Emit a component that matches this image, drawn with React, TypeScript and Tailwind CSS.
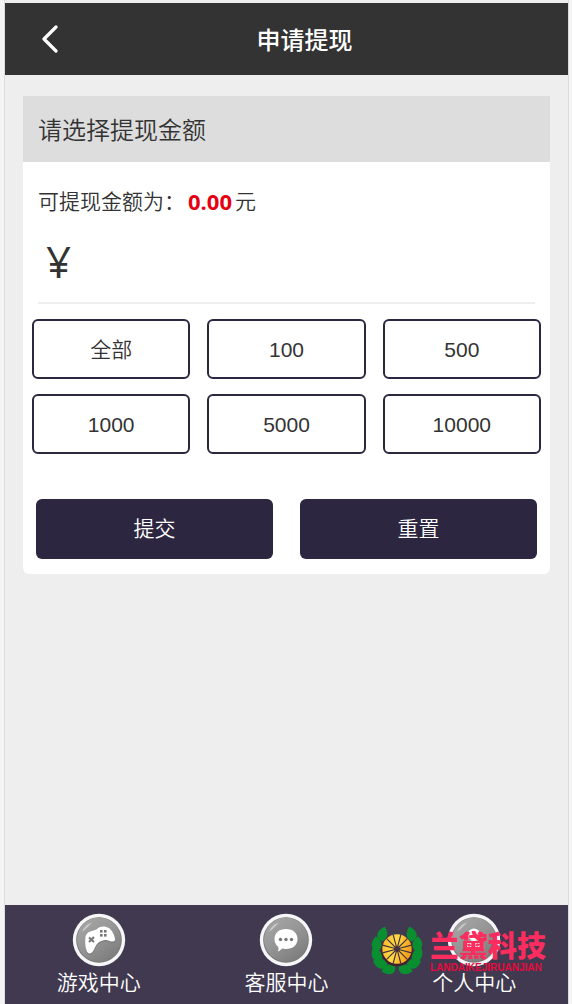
import { useId, useState } from "react";
import type { ReactNode } from "react";

const amounts = ["全部", "100", "500", "1000", "5000", "10000"];

function Disc({ children }: { children: ReactNode }) {
  const id = useId();
  return (
    <svg viewBox="0 0 54 54" className="h-[54px] w-[54px]" aria-hidden="true">
      <defs>
        <linearGradient id={id} x1="0" y1="0" x2="0.7" y2="1">
          <stop offset="0" stopColor="#a8a8a8" />
          <stop offset="0.5" stopColor="#979797" />
          <stop offset="1" stopColor="#7d7d7d" />
        </linearGradient>
      </defs>
      <circle cx="27" cy="27" r="26.2" fill="#f6f5f7" />
      <circle cx="27" cy="27" r="22.8" fill="#777" />
      <circle cx="27" cy="26.6" r="22" fill={`url(#${id})`} />
      <path d="M10 19C12 14 15 11 20 9.500C17.500 12.500 14.500 15.500 10 19Z" fill="#c9c9c9" />
      {children}
    </svg>
  );
}

function GamepadIcon() {
  return (
    <Disc>
      <path
        d="M14 24.500C16 19 21 18 25 17C28 13 33 13 37 15.500C40 18 43 24 43 27.500C43 30 40 30 37 28.500C33 27 29 29 26 31C23 34 22 41 18 41.500C14 42 13 33 14 24.500Z"
        fill="#555"
        opacity="0.45"
      />
      <path
        d="M13.500 23.500C15 18 21 18 24.500 16.500C27 13 33 12.500 37 15C40 17 43 23 43 26.500C43 29 40 29 37 27.700C33 26 29 28 26 30C22.500 33 22 40 18 40.500C14 41 12.500 32 13.500 23.500Z"
        fill="#fff"
      />
      <path d="M17 24.500l5 4.500M22 24l-5 5" stroke="#777" strokeWidth="2" />
      <g fill="#777">
        <rect x="28" y="17" width="2.600" height="2.600" />
        <rect x="32" y="17" width="2.600" height="2.600" />
        <rect x="28" y="21" width="2.600" height="2.600" />
        <rect x="32" y="21" width="2.600" height="2.600" />
      </g>
    </Disc>
  );
}

function ChatIcon() {
  return (
    <Disc>
      <path
        d="M27 16C34 16 38.500 20 38.500 26C38.500 32 34 36 27 36C25.500 36 24.500 36 23 35.600C21.800 37 20.500 38 19 38.500C19.500 37 19.600 35.500 19.300 34C17 32 15.500 29.500 15.500 26C15.500 20 20 16 27 16Z"
        fill="#fff"
      />
      <g fill="#777">
        <circle cx="21.500" cy="26.500" r="1.700" />
        <circle cx="27" cy="26.500" r="1.700" />
        <circle cx="32.500" cy="26.500" r="1.700" />
      </g>
    </Disc>
  );
}

function PersonIcon() {
  return (
    <Disc>
      <circle cx="27" cy="21.500" r="6" fill="#fff" />
      <path d="M18 38C18 31 21.500 27 27 27C32.500 27 36 31 36 38Z" fill="#fff" />
    </Disc>
  );
}

const spokes = Array.from({ length: 12 }, (_, i) => i * 30 + 15);
const leaves = [
  { x: 12, y: 8, r: 10 },
  { x: 6, y: 18, r: -12 },
  { x: 6, y: 29, r: -38 },
  { x: 10, y: 38, r: -78 },
  { x: 19, y: 44, r: -110 },
];

function Wreath() {
  const id = useId();
  const branch = leaves.map((l) => (
    <path
      key={l.y}
      d="M1.500 -7.500C5.500 -3.500 7.500 2.500 2 7C-5.500 6.500 -7.500 -1.500 1.500 -7.500Z"
      transform={`translate(${l.x} ${l.y}) rotate(${l.r})`}
      fill="#0a8f30"
    />
  ));
  return (
    <svg viewBox="0 0 54 50" className="h-[50px] w-[54px] shrink-0" aria-hidden="true">
      <defs>
        <linearGradient id={id} x1="0" y1="0" x2="1" y2="0.3">
          <stop offset="0" stopColor="#f9b224" />
          <stop offset="0.5" stopColor="#ffda45" />
          <stop offset="1" stopColor="#f5a01a" />
        </linearGradient>
      </defs>
      <g>{branch}</g>
      <g transform="translate(54 0) scale(-1 1)">{branch}</g>
      <circle cx="27" cy="24.500" r="15.800" fill="#42202c" />
      <circle cx="27" cy="23" r="14.700" fill={`url(#${id})`} />
      {spokes.map((a) => (
        <path
          key={a}
          d="M27 23V8"
          transform={`rotate(${a} 27 23)`}
          stroke="#42303e"
          strokeWidth="1.100"
        />
      ))}
      <circle cx="27" cy="23" r="2.800" fill="#42303e" />
    </svg>
  );
}

const tabs = [
  { label: "游戏中心", icon: <GamepadIcon /> },
  { label: "客服中心", icon: <ChatIcon /> },
  { label: "个人中心", icon: <PersonIcon /> },
];

export default function App() {
  const [amount, setAmount] = useState("");
  return (
    <div className="min-h-screen bg-[#f4f4f4] pr-[3px] pl-1 font-['Noto_Sans_CJK_SC',sans-serif] text-[#333]">
      <div className="flex min-h-screen flex-col border-x border-[#dcdcdc] bg-[#eee] pt-[3px]">
        <header className="grid h-[72px] grid-cols-[88px_1fr_52px] items-center bg-[#333] text-white">
          <button type="button" aria-label="返回" className="flex h-full items-center pl-9">
            <svg viewBox="0 0 18 28" className="h-7 w-[18px]" fill="none" aria-hidden="true">
              <path
                d="M15 2L3 14L15 26"
                stroke="#fff"
                strokeWidth="3.200"
                strokeLinecap="round"
                strokeLinejoin="round"
              />
            </svg>
          </button>
          <h1 className="text-center text-2xl font-medium">申请提现</h1>
        </header>

        <main className="flex-1 px-[18px] pt-[21px]">
          <form className="rounded-b-md bg-white pb-[15px]" onSubmit={(e) => e.preventDefault()}>
            <h2 className="flex h-[66px] items-center bg-[#ddd] px-[15px] text-2xl font-[350]">
              请选择提现金额
            </h2>
            <p className="flex h-[78px] items-center px-[15px] text-[21px] font-[350]">
              可提现金额为：
              <strong className="mx-[3px] font-['Open_Sans',sans-serif] text-[22px] font-bold text-[#e60012]">
                0.00
              </strong>
              元
            </p>
            <div className="mx-[15px] flex h-16 items-center border-b-2 border-[#eee] pb-5">
              <label
                htmlFor="amount"
                className="w-11 pl-2 font-['Open_Sans',sans-serif] text-[44px] leading-none font-medium"
              >
                ¥
              </label>
              <input
                id="amount"
                value={amount}
                onChange={(e) => setAmount(e.target.value)}
                inputMode="decimal"
                className="h-10 min-w-0 flex-1 bg-transparent text-3xl outline-none"
              />
            </div>
            <div className="mt-[15px] grid grid-cols-3 gap-x-[17px] gap-y-[15px] px-[9px]">
              {amounts.map((a) => (
                <button
                  key={a}
                  type="button"
                  onClick={() => setAmount(a === "全部" ? "0.00" : a)}
                  className="h-[60px] rounded-md border-2 border-[#2c2640] pt-[2px] font-['Liberation_Sans','Noto_Sans_CJK_SC',sans-serif] text-[21px] font-[350]"
                >
                  {a}
                </button>
              ))}
            </div>
            <div className="mt-[45px] grid grid-cols-2 gap-[27px] px-[13px]">
              <button
                type="submit"
                className="h-[60px] rounded-md bg-[#2c2640] pb-[2px] text-[21px] font-[350] text-white"
              >
                提交
              </button>
              <button
                type="button"
                onClick={() => setAmount("")}
                className="h-[60px] rounded-md bg-[#2c2640] pb-[2px] text-[21px] font-[350] text-white"
              >
                重置
              </button>
            </div>
          </form>
        </main>

        <nav className="relative grid h-[99px] grid-cols-3 bg-[#403950] text-white">
          {tabs.map((t) => (
            <a key={t.label} href="#" className="flex flex-col items-center pt-2 text-[21px] leading-7 font-[350]">
              {t.icon}
              {t.label}
            </a>
          ))}
          <div className="pointer-events-none absolute top-[21px] right-[22px] flex gap-[6px]">
            <Wreath />
            <div className="flex flex-col whitespace-nowrap">
              <span className="text-[29px] leading-9 font-black text-[#fb2c5e]">兰黛科技</span>
              <span className="font-['Liberation_Sans',sans-serif] text-[10px] leading-3 font-bold text-[#e8093c]">
                LANDAIKEJIRUANJIAN
              </span>
            </div>
          </div>
        </nav>
      </div>
    </div>
  );
}
